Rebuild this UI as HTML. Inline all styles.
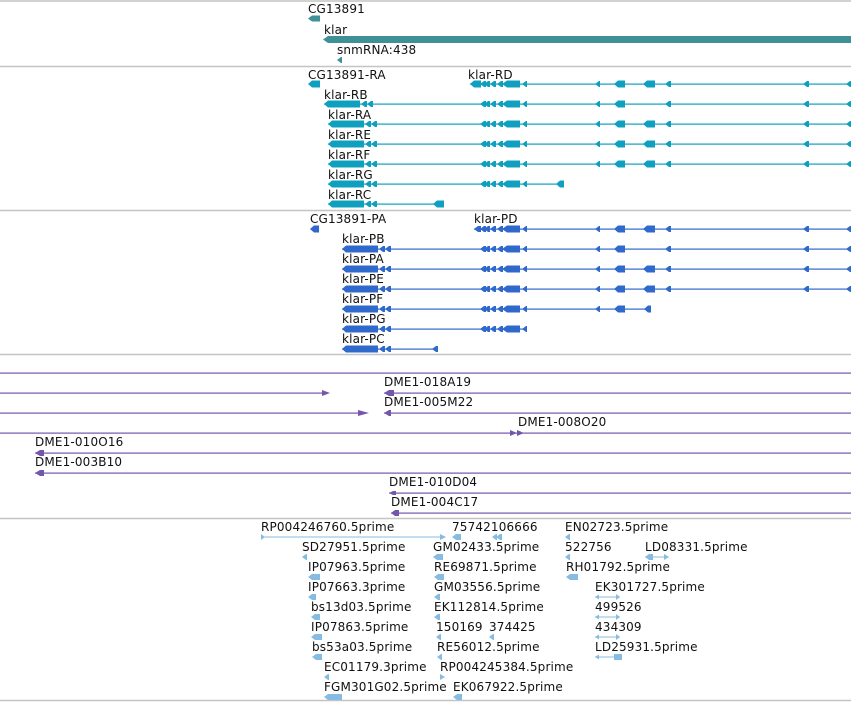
<!DOCTYPE html>
<html><head><meta charset="utf-8"><style>
html,body{margin:0;padding:0;background:#fff;width:851px;height:702px;overflow:hidden}
svg{display:block}
text{font-family:"DejaVu Sans","Liberation Sans",sans-serif;font-size:12px;letter-spacing:0.15px;fill:#111}
</style></head><body>
<svg width="851" height="702" viewBox="0 0 851 702" xmlns="http://www.w3.org/2000/svg">
<defs>
<g id="c1">
<polygon points="480,0 484,-3 486,-3 486,3 484,3"/>
<polygon points="484,0 488,-3 490,-3 490,3 488,3"/>
<polygon points="490,0 494,-3 496,-3 496,3 494,3"/>
<polygon points="497,0 501,-3 503,-3 503,3 501,3"/>
<polygon points="502,0 507,-3.5 520,-3.5 520,3.5 507,3.5"/>
<polygon points="522,0 526,-3 527,-3 527,3 526,3"/>
</g>
<g id="t1">
<polygon points="595,0 599,-3 600,-3 600,3 599,3"/>
<polygon points="614,0 618,-3.5 625,-3.5 625,3.5 618,3.5"/>
<polygon points="665,0 669,-3 671,-3 671,3 669,3"/>
<polygon points="803,0 807,-3 809,-3 809,3 807,3"/>
<polygon points="846,0 850,-3 851,-3 851,3 850,3"/>
</g>
<g id="b643"><polygon points="643,0 647,-3.5 655,-3.5 655,3.5 647,3.5"/></g>
<g id="hd"><polygon points="0,0 4,-3.5 36,-3.5 36,3.5 4,3.5"/><polygon points="37,0 41,-3 43,-3 43,3 41,3"/><polygon points="43,0 47,-3 49,-3 49,3 47,3"/></g>
</defs>

<g stroke="#c4c4c4" stroke-width="1.5">
<line x1="0" y1="1" x2="851" y2="1"/><line x1="0" y1="66.5" x2="851" y2="66.5"/>
<line x1="0" y1="210.5" x2="851" y2="210.5"/><line x1="0" y1="354.5" x2="851" y2="354.5"/>
<line x1="0" y1="518.5" x2="851" y2="518.5"/><line x1="0" y1="700.5" x2="851" y2="700.5"/>
</g>

<text x="308" y="13">CG13891</text>
<polygon fill="#3f9097" points="308,18.5 312,15.5 320,15.5 320,21.5 312,21.5"/>
<text x="324" y="34">klar</text>
<polygon fill="#3f9097" points="323,39.5 328,36 851,36 851,43 328,43"/>
<text x="337" y="54">snmRNA:438</text>
<polygon fill="#3f9097" points="337,60 341,57 342,57 342,63 341,63"/>

<g fill="#0fa0c0">
<text x="308" y="79">CG13891-RA</text><text x="468" y="79">klar-RD</text>
<polygon points="308,84 312,80.5 320,80.5 320,87.5 312,87.5"/>
<rect x="470" y="83.5" width="381" height="1.2"/>
<polygon points="470,84 474,80.5 481,80.5 481,87.5 474,87.5"/>
<use href="#c1" y="84"/><use href="#t1" y="84"/><use href="#b643" y="84"/>
<text x="324" y="99">klar-RB</text>
<rect x="324" y="103.5" width="527" height="1.2"/><use href="#hd" x="324" y="104"/><use href="#c1" y="104"/><use href="#t1" y="104"/>
<text x="328" y="119">klar-RA</text>
<rect x="328" y="123.5" width="523" height="1.2"/><use href="#hd" x="328" y="124"/><use href="#c1" y="124"/><use href="#t1" y="124"/><use href="#b643" y="124"/>
<text x="328" y="139">klar-RE</text>
<rect x="328" y="143.5" width="523" height="1.2"/><use href="#hd" x="328" y="144"/><use href="#c1" y="144"/><use href="#t1" y="144"/><use href="#b643" y="144"/>
<text x="328" y="159">klar-RF</text>
<rect x="328" y="163.5" width="523" height="1.2"/><use href="#hd" x="328" y="164"/><use href="#c1" y="164"/><use href="#t1" y="164"/><use href="#b643" y="164"/>
<text x="328" y="179">klar-RG</text>
<rect x="328" y="183.5" width="235" height="1.2"/><use href="#hd" x="328" y="184"/><use href="#c1" y="184"/>
<polygon points="556,184 560,180.5 564,180.5 564,187.5 560,187.5"/>
<text x="328" y="199">klar-RC</text>
<rect x="328" y="203.5" width="115" height="1.2"/><use href="#hd" x="328" y="204"/>
<polygon points="433,204 437,200.5 444,200.5 444,207.5 437,207.5"/>
</g>

<g fill="#3069cc">
<text x="310" y="223">CG13891-PA</text><text x="474" y="223">klar-PD</text>
<polygon points="310,229 314,225.5 319,225.5 319,232.5 314,232.5"/>
<rect x="474" y="228.5" width="377" height="1.2"/>
<polygon points="474,229 478,226 481,226 481,232 478,232"/>
<use href="#c1" y="229"/><use href="#t1" y="229"/><use href="#b643" y="229"/>
<text x="342" y="243">klar-PB</text>
<rect x="342" y="248.5" width="509" height="1.2"/><use href="#hd" x="342" y="249"/><use href="#c1" y="249"/><use href="#t1" y="249"/>
<text x="342" y="263">klar-PA</text>
<rect x="342" y="268.5" width="509" height="1.2"/><use href="#hd" x="342" y="269"/><use href="#c1" y="269"/><use href="#t1" y="269"/><use href="#b643" y="269"/>
<text x="342" y="283">klar-PE</text>
<rect x="342" y="288.5" width="509" height="1.2"/><use href="#hd" x="342" y="289"/><use href="#c1" y="289"/><use href="#t1" y="289"/><use href="#b643" y="289"/>
<text x="342" y="303">klar-PF</text>
<rect x="342" y="308.5" width="309" height="1.2"/><use href="#hd" x="342" y="309"/><use href="#c1" y="309"/>
<polygon points="595,309 599,306 600,306 600,312 599,312"/>
<polygon points="614,309 618,305.5 625,305.5 625,312.5 618,312.5"/>
<polygon points="644,309 648,305.5 651,305.5 651,312.5 648,312.5"/>
<text x="342" y="323">klar-PG</text>
<rect x="342" y="328.5" width="185" height="1.2"/><use href="#hd" x="342" y="329"/><use href="#c1" y="329"/>
<text x="342" y="343">klar-PC</text>
<rect x="342" y="348.5" width="96" height="1.2"/><use href="#hd" x="342" y="349"/>
<polygon points="432,349 436,346 438,346 438,352 436,352"/>
</g>

<g fill="#7456aa">
<rect x="0" y="372.5" width="851" height="1.2"/>
<rect x="0" y="392.5" width="324" height="1.2"/><polygon points="322,390 330,393 322,396"/>
<text x="384" y="386">DME1-018A19</text>
<rect x="384" y="392.5" width="467" height="1.2"/><polygon points="384,393 389,390 394,390 394,396 389,396"/>
<rect x="0" y="412.5" width="360" height="1.2"/><polygon points="358,410 369,413 358,416"/>
<text x="384" y="406">DME1-005M22</text>
<rect x="384" y="412.5" width="467" height="1.2"/><polygon points="384,413 389,410 391,410 391,416 389,416"/>
<text x="518" y="426">DME1-008O20</text>
<rect x="0" y="432.5" width="851" height="1.2"/><polygon points="510,430 517,433 510,436"/><polygon points="517,430 524,433 517,436"/>
<text x="35" y="446">DME1-010O16</text>
<rect x="35" y="452.5" width="816" height="1.2"/><polygon points="35,453 40,450 44,450 44,456 40,456"/>
<text x="35" y="466">DME1-003B10</text>
<rect x="35" y="472.5" width="816" height="1.2"/><polygon points="35,473 40,470 44,470 44,476 40,476"/>
<text x="389" y="486">DME1-010D04</text>
<rect x="389" y="492.5" width="462" height="1.2"/><polygon points="389,493 393,491 396,491 396,495 393,495"/>
<text x="391" y="506">DME1-004C17</text>
<rect x="391" y="512.5" width="460" height="1.2"/><polygon points="391,513 395,510 399,510 399,516 395,516"/>
</g>

<g fill="#86bce2">
<text x="261" y="531">RP004246760.5prime</text>
<polygon points="261,534 265,537 261,540"/><rect x="261" y="536.5" width="184" height="1"/><polygon points="440,534 446,537 440,540"/>
<text x="452" y="531">75742106666</text>
<polygon points="452,537 456,534 461,534 461,540 456,540"/>
<polygon points="492,537 496,534 497,534 497,540 496,540"/><polygon points="496,537 500,534 502,534 502,540 500,540"/>
<text x="565" y="531">EN02723.5prime</text>
<polygon points="565,537 569,534 570,534 570,540 569,540"/>

<text x="302" y="551">SD27951.5prime</text>
<polygon points="302,557 306,554 307,554 307,560 306,560"/>
<text x="433" y="551">GM02433.5prime</text>
<polygon points="433,557 437,554 443,554 443,560 437,560"/>
<text x="565" y="551">522756</text>
<polygon points="565,557 569,554 570,554 570,560 569,560"/>
<text x="645" y="551">LD08331.5prime</text>
<polygon points="645,557 649,554 653,554 653,560 649,560"/><rect x="645" y="556.5" width="23" height="1"/><polygon points="664,554 669,557 664,560"/>

<text x="308" y="571">IP07963.5prime</text>
<polygon points="308,577 312,574 320,574 320,580 312,580"/>
<text x="434" y="571">RE69871.5prime</text>
<polygon points="434,577 438,574 444,574 444,580 438,580"/>
<text x="566" y="571">RH01792.5prime</text>
<polygon points="566,577 570,574 578,574 578,580 570,580"/>

<text x="308" y="591">IP07663.3prime</text>
<polygon points="308,597 312,594 316,594 316,600 312,600"/>
<text x="434" y="591">GM03556.5prime</text>
<polygon points="434,597 438,594 440,594 440,600 438,600"/>
<text x="595" y="591">EK301727.5prime</text>
<polygon points="595,597 599,594.5 599,599.5"/><rect x="595" y="596.5" width="25" height="1"/><polygon points="620,597 616,594 616,600"/>

<text x="311" y="611">bs13d03.5prime</text>
<polygon points="311,617 315,614 320,614 320,620 315,620"/>
<text x="434" y="611">EK112814.5prime</text>
<polygon points="434,617 438,614 440,614 440,620 438,620"/>
<text x="595" y="611">499526</text>
<polygon points="595,617 599,614.5 599,619.5"/><rect x="595" y="616.5" width="25" height="1"/><polygon points="620,617 616,614 616,620"/>

<text x="311" y="631">IP07863.5prime</text>
<polygon points="311,637 315,634 322,634 322,640 315,640"/>
<text x="436" y="631">150169</text>
<polygon points="436,637 440,634 441,634 441,640 440,640"/>
<text x="489" y="631">374425</text>
<polygon points="489,637 493,634 494,634 494,640 493,640"/>
<text x="595" y="631">434309</text>
<polygon points="595,637 599,634.5 599,639.5"/><rect x="595" y="636.5" width="25" height="1"/><polygon points="620,637 616,634 616,640"/>

<text x="312" y="651">bs53a03.5prime</text>
<polygon points="312,657 316,654 322,654 322,660 316,660"/>
<text x="437" y="651">RE56012.5prime</text>
<polygon points="437,657 441,654 442,654 442,660 441,660"/>
<text x="595" y="651">LD25931.5prime</text>
<polygon points="595,657 599,654.5 599,659.5"/><rect x="595" y="656.5" width="20" height="1"/><polygon points="614,654 622,654 622,660 614,660"/>

<text x="324" y="671">EC01179.3prime</text>
<polygon points="324,677 328,674 329,674 329,680 328,680"/>
<text x="440" y="671">RP004245384.5prime</text>
<polygon points="440,674 445,677 440,680"/>

<text x="324" y="691">FGM301G02.5prime</text>
<polygon points="324,697 328,694 342,694 342,700 328,700"/>
<text x="453" y="691">EK067922.5prime</text>
<polygon points="453,697 457,694 462,694 462,700 457,700"/>
</g>
</svg>
</body></html>
